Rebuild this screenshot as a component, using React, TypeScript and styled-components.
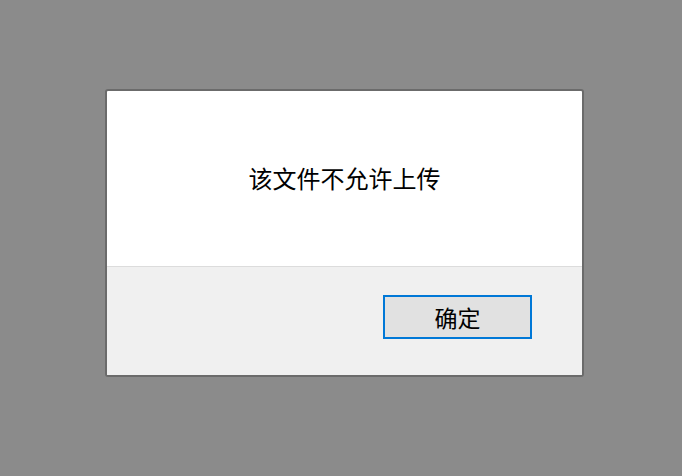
import styled, { createGlobalStyle } from "styled-components";

const GlobalStyle = createGlobalStyle`
    html, body {
        margin: 0;
        padding: 0;
        background-color: #8b8b8b;
    }
    body {
        font-family: "Noto Sans CJK SC", "Noto Sans", sans-serif;
    }
`;

const Overlay = styled.div`
    width: 682px;
    height: 476px;
    box-sizing: border-box;
    padding: 89px 0 0 105px;
    background-color: #8b8b8b;
`;

const Dialog = styled.div`
    width: 479px;
    height: 288px;
    box-sizing: border-box;
    display: flex;
    flex-direction: column;
    border: 2px solid #6b6b6b;
    border-radius: 3px;
    overflow: hidden;
    background-color: #ffffff;
`;

const Body = styled.div`
    height: 175px;
    display: flex;
    align-items: center;
    justify-content: center;
    border-bottom: 1px solid #dcdcdc;
`;

const Message = styled.p`
    margin: 0 0 2px 0;
    font-size: 24px;
    color: #000000;
`;

const Footer = styled.footer`
    flex: 1;
    display: flex;
    justify-content: flex-end;
    align-items: flex-start;
    padding: 28px 50px 0 0;
    background-color: #f0f0f0;
`;

const Button = styled.button`
    width: 149px;
    height: 44px;
    box-sizing: border-box;
    border: 2px solid #0078d7;
    background-color: #e1e1e1;
    font-family: inherit;
    font-size: 23px;
    color: #000000;
    padding: 0;
    cursor: pointer;
`;

export default function App() {
    return (
        <>
            <GlobalStyle />
            <Overlay>
                <Dialog role="dialog">
                    <Body>
                        <Message>该文件不允许上传</Message>
                    </Body>
                    <Footer>
                        <Button>确定</Button>
                    </Footer>
                </Dialog>
            </Overlay>
        </>
    );
}
